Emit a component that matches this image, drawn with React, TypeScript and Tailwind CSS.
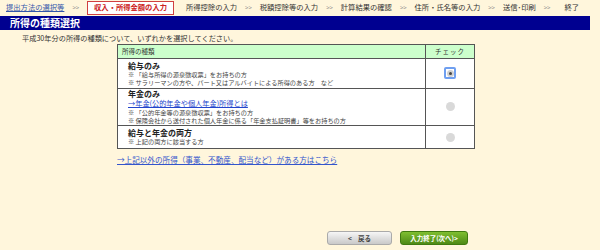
import React from 'react';

const font = { fontFamily: '"Noto Sans CJK JP", "Noto Sans", sans-serif' };

const steps = ['所得控除の入力', '税額控除等の入力', '計算結果の確認', '住所・氏名等の入力', '送信･印刷', '終了'];

const Sep = () => <span className="mx-[8px] shrink-0 text-[6px] text-[#888]">&gt;&gt;</span>;

const Radio = ({ checked }: { checked?: boolean }) =>
  checked ? (
    <span className="inline-flex h-[12px] w-[12px] items-center justify-center rounded-[2px] border-2 border-[#6f9ff0] bg-white">
      <span className="flex h-[7px] w-[7px] items-center justify-center rounded-full bg-[#cfcfcf]">
        <span className="h-[3px] w-[3px] rounded-full bg-[#444]" />
      </span>
    </span>
  ) : (
    <span className="inline-block h-[9px] w-[9px] rounded-full bg-[#d9d9d9]" />
  );

const Note = ({ children }: { children: React.ReactNode }) => (
  <div className="text-[6.2px] leading-[7.5px] text-[#444]">{children}</div>
);

export default function App() {
  return (
    <div className="h-[250px] w-[600px] overflow-hidden bg-[#fff6dc] text-[#222]" style={font}>
      {/* breadcrumb */}
      <div className="flex h-[16px] items-center whitespace-nowrap pl-[6px] text-[7.3px] leading-none text-[#333]">
        <a className="shrink-0 text-[#3355aa] underline">提出方法の選択等</a>
        <Sep />
        <span className="flex h-[14px] shrink-0 items-center border border-[#d04040] bg-white px-[6px] font-bold text-[#cc2222]">
          収入・所得金額の入力
        </span>
        <span className="ml-[12px] flex shrink-0 items-center">
          {steps.map((s, i) => (
            <React.Fragment key={s}>
              <span className={i === 5 ? 'ml-[6px] shrink-0' : 'shrink-0'}>{s}</span>
              {i < steps.length - 1 && <Sep />}
            </React.Fragment>
          ))}
        </span>
      </div>

      {/* title bar */}
      <div className="flex h-[14px] w-[590px] items-center bg-[#000090] pl-[10px] text-[10px] font-bold leading-none text-white">
        所得の種類選択
      </div>

      <p className="mt-[3px] pl-[22px] text-[7.2px] leading-[10px] text-[#333]">
        平成30年分の所得の種類について、いずれかを選択してください。
      </p>

      <table className="ml-[117px] mt-[1px] w-[358px] border-collapse border border-[#555] bg-white">
        <thead>
          <tr className="h-[14px] bg-[#ccffcc] text-[6.5px] leading-none text-[#333]">
            <th className="w-[308px] border border-[#555] pl-[4px] text-left font-normal">所得の種類</th>
            <th className="border border-[#555] text-center font-normal tracking-[1px]">チェック</th>
          </tr>
        </thead>
        <tbody>
          <tr className="h-[30px]">
            <td className="border border-[#555] pl-[10px] align-middle">
              <div className="text-[8px] font-bold leading-[10px]">給与のみ</div>
              <Note>※ 「給与所得の源泉徴収票」をお持ちの方</Note>
              <Note>※ サラリーマンの方や、パート又はアルバイトによる所得のある方　など</Note>
            </td>
            <td className="border border-[#555] text-center align-middle">
              <div className="flex justify-center pb-[1px]">
                <Radio checked />
              </div>
            </td>
          </tr>
          <tr className="h-[37px]">
            <td className="border border-[#555] pl-[10px] align-middle">
              <div className="text-[8px] font-bold leading-[8px]">年金のみ</div>
              <div className="text-[7.2px] leading-[11px]">
                <a className="text-[#2244cc] underline">→年金(公的年金や個人年金)所得とは</a>
              </div>
              <Note>※ 「公的年金等の源泉徴収票」をお持ちの方</Note>
              <Note>※ 保険会社から送付された個人年金に係る「年金支払証明書」等をお持ちの方</Note>
            </td>
            <td className="border border-[#555] text-center align-middle">
              <div className="flex justify-center pb-[1px]">
                <Radio />
              </div>
            </td>
          </tr>
          <tr className="h-[23px]">
            <td className="border border-[#555] pl-[10px] align-middle">
              <div className="text-[8px] font-bold leading-[10px]">給与と年金の両方</div>
              <Note>※ 上記の両方に該当する方</Note>
            </td>
            <td className="border border-[#555] text-center align-middle">
              <div className="flex justify-center">
                <Radio />
              </div>
            </td>
          </tr>
        </tbody>
      </table>

      <a className="ml-[117px] mt-[6px] block text-[7.6px] leading-[10px] text-[#3355cc] underline">
        →上記以外の所得（事業、不動産、配当など）がある方はこちら
      </a>

      <div className="mt-[66px] flex gap-[8px] pl-[327px]">
        <button className="flex h-[14px] w-[65px] items-center justify-center gap-[6px] rounded-[3px] border border-[#aaa] bg-gradient-to-b from-[#f6f6f6] to-[#c9c9c9] text-[6.5px] font-bold leading-none text-[#444]">
          <span>&lt;</span>
          <span>戻る</span>
        </button>
        <button className="flex h-[14px] w-[68px] items-center justify-center rounded-[3px] border border-[#3f7a10] bg-gradient-to-b from-[#7fbf30] to-[#4e8a16] text-[6.5px] font-bold leading-none text-white">
          入力終了(次へ)&gt;
        </button>
      </div>
    </div>
  );
}
